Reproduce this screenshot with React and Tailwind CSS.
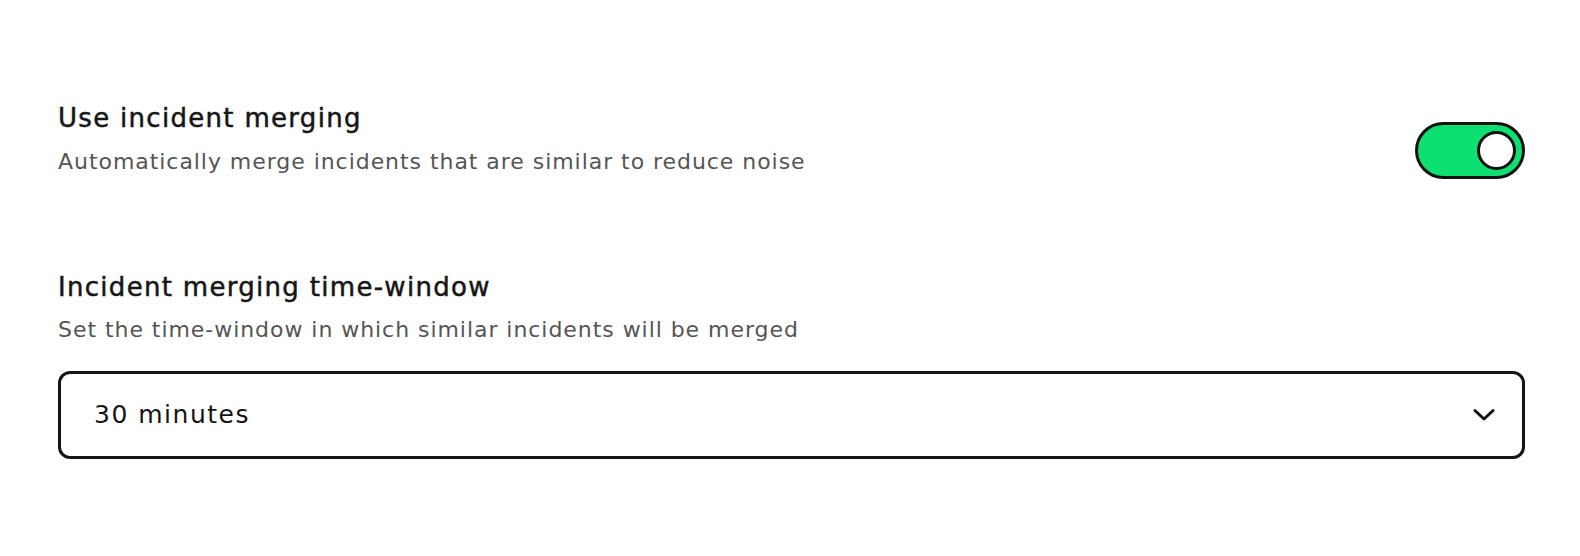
import React from "react";

export default function App() {
  return (
    <div className="w-[1580px] h-[556px] bg-white" style={{ fontFamily: "'DejaVu Sans', Verdana, sans-serif" }}>
      <div className="pl-[58px] pr-[55px] pt-[101px] flex flex-col">
        <div className="flex items-start justify-between">
          <div className="flex flex-col">
            <div className="text-[26px] leading-[34px] tracking-[1.3px] text-[#161616] [-webkit-text-stroke:0.5px_#161616]">Use incident merging</div>
            <div className="mt-[13px] text-[22px] leading-[28px] tracking-[0.95px] text-[#555555]">Automatically merge incidents that are similar to reduce noise</div>
          </div>
          <button className="mt-[21px] w-[110px] h-[57px] rounded-full bg-[#0ddf71] border-[3px] border-[#111111] flex items-center justify-end pr-[6px]">
            <span className="w-[39px] h-[39px] rounded-full bg-white border-[3px] border-[#111111]" />
          </button>
        </div>
        <div className="mt-[91px] flex flex-col">
          <div className="text-[26px] leading-[34px] tracking-[1.3px] text-[#161616] [-webkit-text-stroke:0.5px_#161616]">Incident merging time-window</div>
          <div className="mt-[12px] text-[22px] leading-[28px] tracking-[0.95px] text-[#555555]">Set the time-window in which similar incidents will be merged</div>
          <div className="mt-[27px] h-[88px] rounded-[12px] border-[3px] border-[#151515] flex items-center justify-between pl-[33px] pr-[27px]">
            <span className="text-[25px] tracking-[1.5px] text-[#151515]">30 minutes</span>
            <svg width="22" height="14" viewBox="0 0 22 14" fill="none">
              <path d="M2 2.5 L11 11 L20 2.5" stroke="#111111" strokeWidth="3" strokeLinecap="round" strokeLinejoin="round" />
            </svg>
          </div>
        </div>
      </div>
    </div>
  );
}
